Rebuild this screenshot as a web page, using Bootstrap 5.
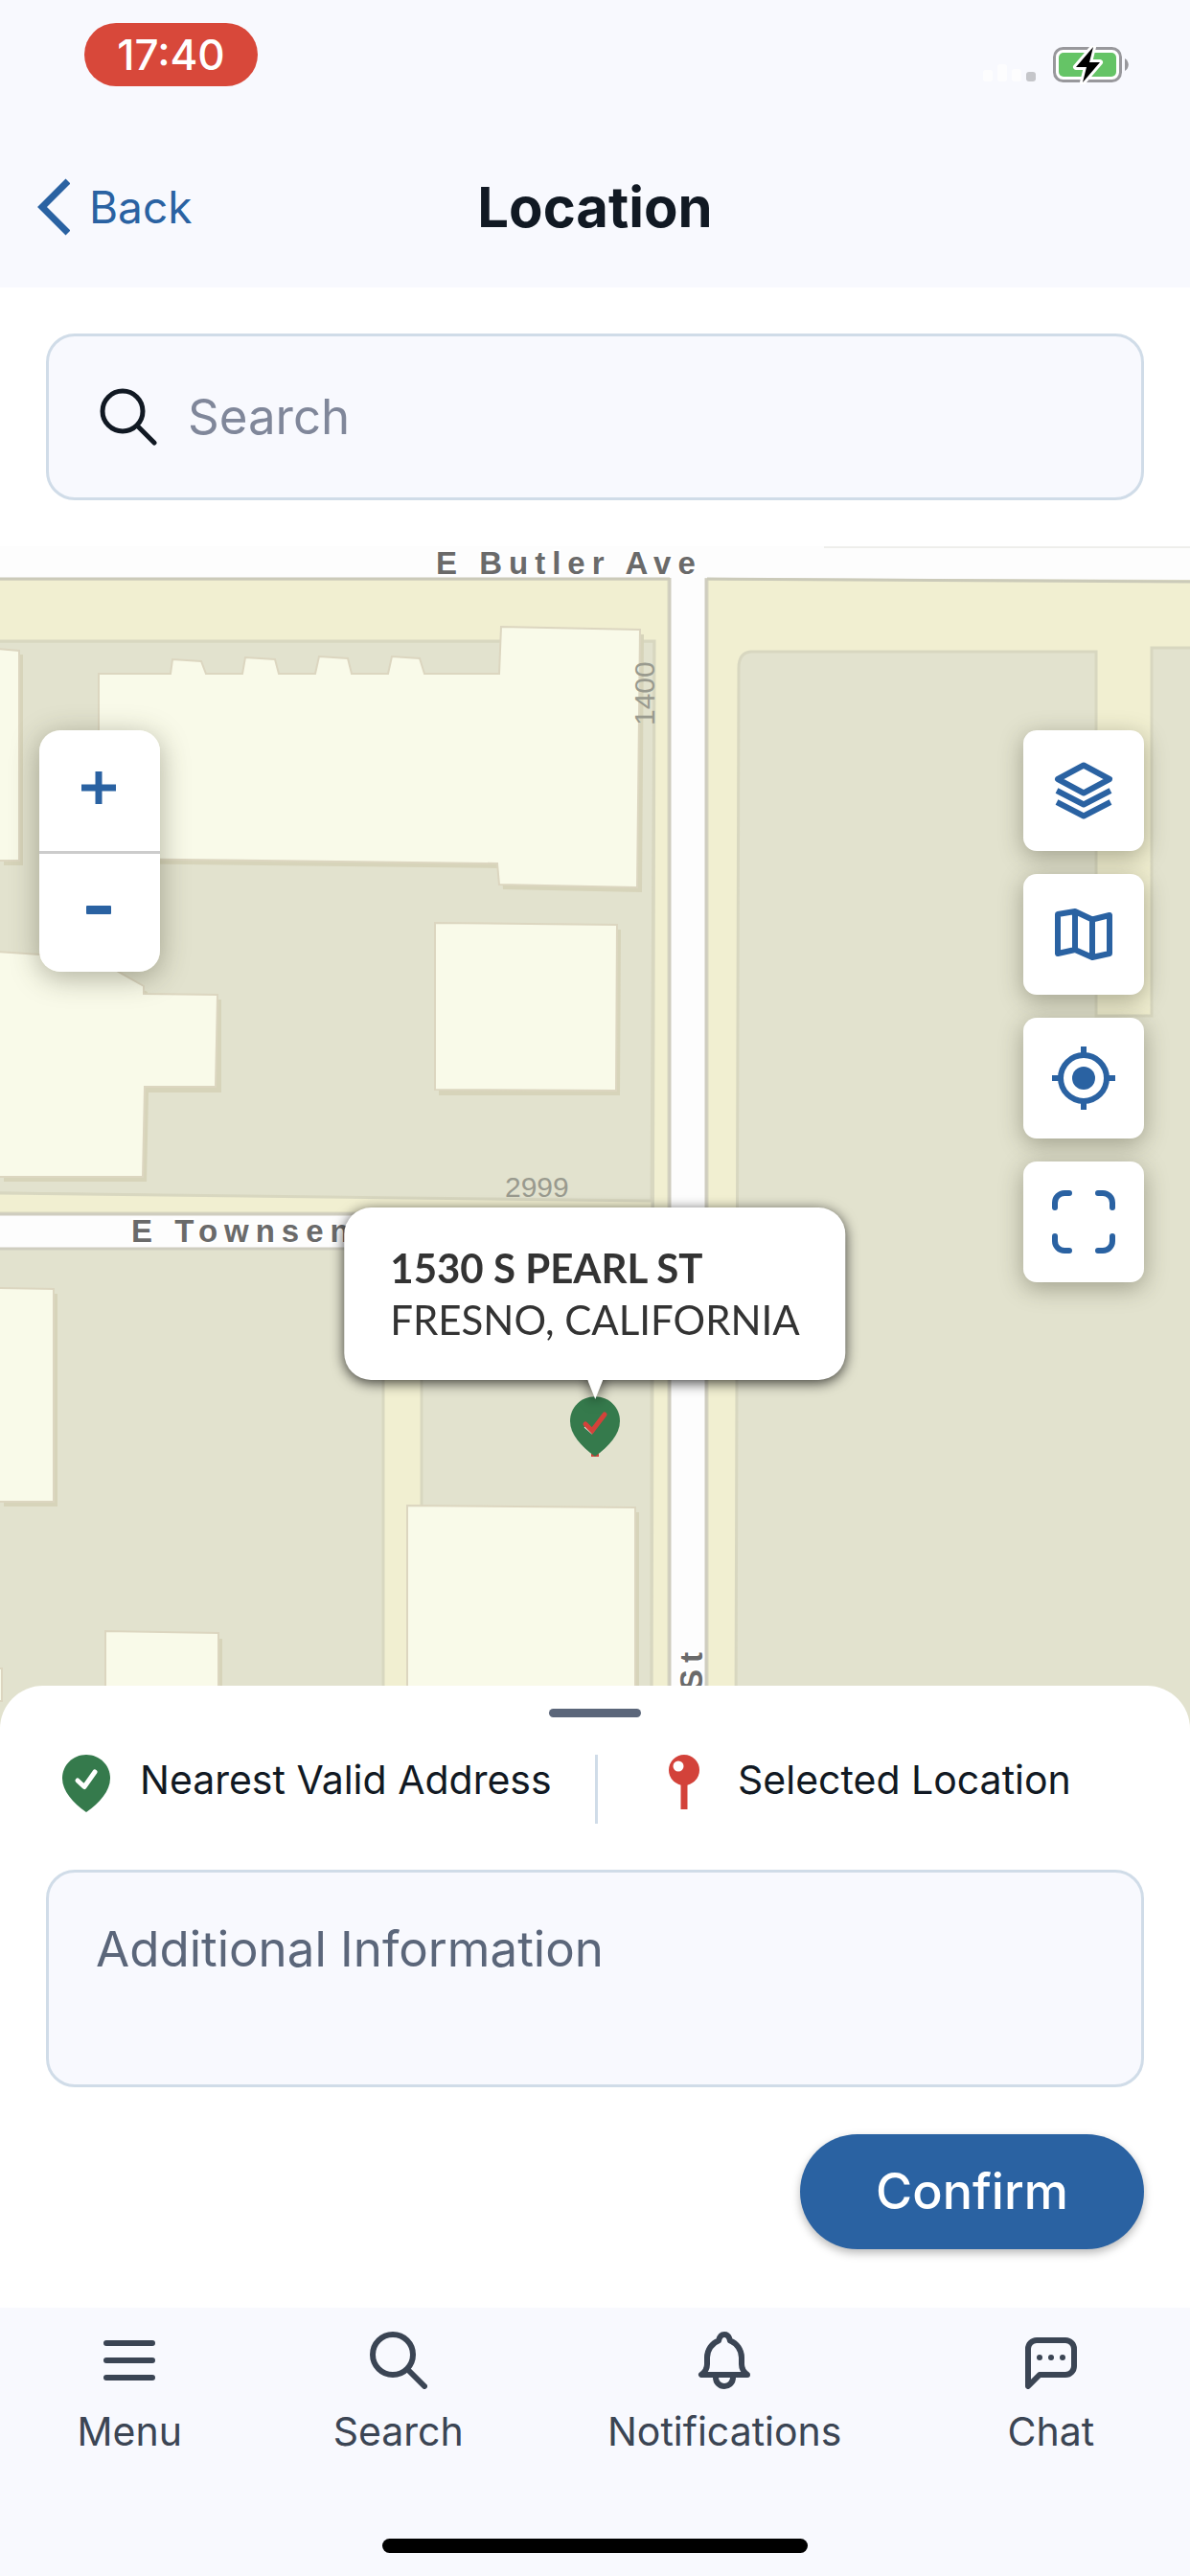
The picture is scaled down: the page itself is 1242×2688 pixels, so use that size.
<!DOCTYPE html>
<html lang="en">
<head>
<meta charset="utf-8">
<meta name="viewport" content="width=device-width, initial-scale=1">
<title>Location</title>
<link rel="stylesheet" href="https://cdn.jsdelivr.net/npm/bootstrap@5.3.0/dist/css/bootstrap.min.css">
<style>
  :root { --ink:#111923; --brand:#2a62a2; --slate:#5b667a; --nav:#3b4554; --line:#d0dce8; --surface:#f8f9fe; }
  body { font-family: Inter, "Liberation Sans", sans-serif; color: var(--ink); background: #fff; }
  svg { display: block; flex: none; }
  .app { min-height: 100vh; }
  .surface { background: var(--surface); }

  .status { height: 132px; padding: 24px 64px 0 88px; }
  .clock { background: #d8483a; color: #fff; font-size: 44px; line-height: 66px; font-weight: 500; border-radius: 33px; width: 181px; }
  .signals { margin-top: 24px; }
  .titlebar { height: 168px; padding: 0 39px; }
  .back-link { color: var(--brand); font-size: 46px; line-height: 60px; gap: 20px; }
  .page-title { font-size: 58px; line-height: 72px; font-weight: 700; }

  .search-area { padding: 48px; }
  .field { background: var(--surface); border: 3px solid var(--line); border-radius: 30px; }
  .search-box { height: 174px; padding: 0 53px; gap: 32px; }
  .search-box input, .notes { font-size: 51px; line-height: 60px; color: var(--ink); }
  .search-box input::placeholder { color: #80879a; opacity: 1; }

  .map { min-height: 900px; background: #e2e2ce; }
  .map-canvas { inset: 0; width: 100%; height: 100%; }
  .street { font: 700 33px "Liberation Sans", sans-serif; letter-spacing: 7px; fill: #6a6a6a; stroke: #fff; stroke-width: 4px; paint-order: stroke; }
  .range { font: 400 30px "Liberation Sans", sans-serif; fill: #999a8e; }
  .map-btn { width: 126px; height: 126px; background: #fff; color: var(--brand); border: 0; padding: 0; }
  .zoom-ctl { left: 41px; top: 192px; border-radius: 22px; overflow: hidden; box-shadow: 0 6px 30px rgba(60,60,40,.4); }
  .zoom-ctl .map-btn { padding: 0 2px 6px 0; }
  .zoom-ctl .map-btn + .map-btn { border-top: 3px solid #ccc; }
  .tools { right: 48px; top: 192px; gap: 24px; }
  .tools .map-btn { border-radius: 14px; box-shadow: 0 6px 24px rgba(60,60,40,.4); }
  .callout { left: 50%; top: 690px; transform: translateX(-50%); filter: drop-shadow(0 3px 7px rgba(0,0,0,.75)); }
  .callout-box { background: #fff; color: #333; border-radius: 28px; height: 180px; padding: 36px 48px; font-family: Lato, sans-serif; font-size: 42px; line-height: 54px; }
  .marker { left: 50%; top: 887px; transform: translateX(-50%); }

  .sheet { background: #fff; border-radius: 45px 45px 0 0; margin-top: -45px; padding: 24px 48px 61px; }
  .handle { width: 96px; height: 9px; border-radius: 5px; background: var(--slate); }
  .legend { margin: 39px 0 48px; height: 72px; font-size: 41px; line-height: 52px; }
  .legend-item { gap: 26px; width: 50%; padding-left: 12px; }
  .legend-item + .legend-item { border-left: 3px solid var(--line); padding-left: 60px; }
  .notes { height: 227px; padding: 50px 49px; resize: none; }
  .notes::placeholder { color: var(--slate); opacity: 1; }
  .confirm { width: 359px; height: 120px; margin-top: 49px; border-radius: 60px; background: var(--brand); color: #fff; font-size: 52px; font-weight: 500; box-shadow: 0 4px 10px rgba(0,0,0,.28); }

  .tabs { padding-top: 25px; display: grid; grid-template-columns: 27fr 29fr 39fr 29fr; }
  .tab-link { color: var(--nav); font-size: 41px; line-height: 50px; gap: 19px; }
  .home-bar { width: 444px; height: 15px; border-radius: 8px; background: #000; margin: 87px auto 24px; }
</style>
<script src="https://cdn.jsdelivr.net/npm/bootstrap@5.3.0/dist/js/bootstrap.bundle.min.js"></script>
</head>
<body>
<svg width="0" height="0" class="position-absolute" aria-hidden="true">
  <symbol id="i-search" viewBox="0 0 60 60"><circle cx="24" cy="24" r="21"/><path d="M40 40 57 57"/></symbol>
  <symbol id="i-pin" viewBox="0 0 50 60"><path d="M25 0C11 0 0 11 0 24.500 0 38 11 50 25 60 39 50 50 38 50 24.500 50 11 39 0 25 0z" fill="#357a4c"/></symbol>
</svg>
<div class="app d-flex flex-column">
  <header class="surface">
    <div class="status d-flex justify-content-between align-items-start">
      <div class="clock text-center">17:40</div>
      <svg class="signals" width="152" height="40" viewBox="0 0 152 40" role="img" aria-label="Battery charging">
        <g fill="#fdfdfe"><rect x="0" y="25" width="10" height="12" rx="3"/><rect x="15" y="19" width="10" height="18" rx="3"/><rect x="30" y="24" width="10" height="13" rx="3"/></g>
        <rect x="45" y="27" width="10" height="10" rx="3" fill="#c5c6ca"/>
        <rect x="74.500" y="2.500" width="69" height="34" rx="9" fill="#fff" stroke="#98989c" stroke-width="3"/>
        <rect x="79" y="7" width="60" height="25" rx="5" fill="#65c466"/>
        <path d="M148 13c5 3 5 10 0 13z" fill="#98989c"/>
        <path d="M115 1 97 22h11l-4 16 18-21h-11z" fill="#000" stroke="#fff" stroke-width="6" stroke-linejoin="round" paint-order="stroke"/>
      </svg>
    </div>
    <nav class="titlebar d-flex align-items-center" aria-label="Page">
      <div class="d-flex flex-fill w-25"><a href="#" class="back-link d-flex align-items-center text-decoration-none">
        <svg width="34" height="60" viewBox="0 0 34 60" fill="none" stroke="currentColor" stroke-width="7"><path d="M32 3 5 30l27 27"/></svg>Back</a></div>
      <h1 class="page-title m-0 text-center">Location</h1>
      <div class="flex-fill w-25"></div>
    </nav>
  </header>

  <div class="search-area">
    <div class="field search-box d-flex align-items-center">
      <svg width="60" height="60" fill="none" stroke="#111923" stroke-width="5" stroke-linecap="round"><use href="#i-search"/></svg>
      <input type="search" class="form-control border-0 bg-transparent shadow-none p-0" placeholder="Search" aria-label="Search">
    </div>
  </div>

  <main class="map position-relative flex-grow-1 overflow-hidden">
    <svg class="map-canvas position-absolute" viewBox="0 570 1242 1234" preserveAspectRatio="xMidYMin slice" role="img" aria-label="Street map">
      <path fill="#e2e2ce" d="M0 570h1242v1234H0z"/>
      <!-- parcels and verges -->
      <g fill="#f1efd1" stroke="#d8d7c0" stroke-width="3">
        <path d="M-5 604H1250V676H1202V1060H1144V680H784Q771 681 771 697L768 1810H738V604H698V1810H680V1255L-5 1245V1264H680V1810 1255L683 669H-5z"/>
        <path d="M-5 604H698V1810H680L683 669H-5z"/>
        <path d="M-5 1245 681 1253V1266H-5z"/>
        <path d="M400 1300h40v510h-40z"/>
      </g>
      <!-- roads -->
      <g fill="#fdfdfd" stroke="#cfcdbf" stroke-width="3">
        <path d="M-5 1267H700V1303H-5z"/>
        <path d="M699 600h38v1210h-38z"/>
      </g>
      <path fill="#fdfdfd" d="M0 570h1242v35L700 603H0z"/>
      <path fill="none" stroke="#cbcab9" stroke-width="3" d="M0 604H699M738 604 1242 607"/>
      <path fill="none" stroke="#e0e0da" stroke-width="1" d="M860 571H1242"/>
      <path fill="#fdfdfd" d="M702 598h32v12h-32zM702 1260h32v50h-32z"/>
      <!-- buildings -->
      <g fill="#d7d4ba" transform="translate(4 5)">
        <path d="M0 678h20v220H0zM104 703H521V655L668 657 666 926 521 923 520 901 104 896zM455 964 644 965 643 1138H454zM0 994 42 996 120 1015 150 1030V1038H227V1135H151L149 1228H0zM0 1345H56V1567H0zM110 1703 228 1705V1810H110zM425 1572 663 1573V1810H425z"/>
      </g>
      <g fill="#f9fae9" stroke="#dcd6c0" stroke-width="2">
        <path d="M-4 677 20 679V898H-4z"/>
        <path d="M103 703H178L180 688 210 690 215 703H253L256 686 287 688 291 703H329L333 685 363 687 367 703H405L409 685 438 687 443 703H521L523 654 668 657 665 926 521 923 519 901 103 896z"/>
        <path d="M454 963 644 965 643 1138 454 1137z"/>
        <path d="M-4 993 42 996 120 1012 150 1029V1037L227 1038 225 1134H151L149 1228H-4z"/>
        <path d="M-4 1344 56 1345V1567H-4z"/>
        <path d="M110 1702 228 1704V1810H110z"/>
        <path d="M425 1571 663 1573V1810H425z"/>
        <path d="M-4 1741H2V1775H-4z"/>
      </g>
      <text class="street" x="455" y="599">E Butler Ave</text>
      <text class="street" x="137" y="1296">E Townsend Ave</text>
      <text class="street" transform="translate(733 1764) rotate(-90)">St</text>
      <text class="range" x="527" y="1249">2999</text>
      <text class="range" transform="translate(683 757) rotate(-90)">1400</text>
    </svg>

    <div class="zoom-ctl position-absolute d-flex flex-column">
      <button type="button" class="map-btn d-flex align-items-center justify-content-center" aria-label="Zoom in"><svg width="36" height="36" viewBox="0 0 36 36" stroke="currentColor" stroke-width="7"><path d="M0 18h36M18 1v34"/></svg></button>
      <button type="button" class="map-btn d-flex align-items-center justify-content-center" aria-label="Zoom out"><svg width="26" height="9" viewBox="0 0 26 9"><rect width="26" height="9" rx="1" fill="currentColor"/></svg></button>
    </div>

    <div class="tools position-absolute d-flex flex-column">
      <button type="button" class="map-btn d-flex align-items-center justify-content-center" aria-label="Layers"><svg width="66" height="66" viewBox="0 0 66 66" fill="none" stroke="currentColor" stroke-width="6" stroke-linejoin="round"><path d="M33 6.500 60 21 33 35.500 6 21zM5 33l28 14.500 28-14.500M5 45l28 14.500 28-14.500"/></svg></button>
      <button type="button" class="map-btn d-flex align-items-center justify-content-center" aria-label="Base map"><svg width="66" height="66" viewBox="0 0 66 66" fill="none" stroke="currentColor" stroke-width="6" stroke-linejoin="round"><path d="M6 12 24 9 42 17.500 60 13V53L42 57 24 49 6 53zM24 9v40M42 17v40"/></svg></button>
      <button type="button" class="map-btn d-flex align-items-center justify-content-center" aria-label="My location"><svg width="66" height="66" viewBox="0 0 66 66" fill="none" stroke="currentColor" stroke-width="6"><circle cx="33" cy="33" r="24"/><circle cx="33" cy="33" r="12" fill="currentColor" stroke="none"/><path d="M33 0v10M33 56v10M0 33h10M56 33h10"/></svg></button>
      <button type="button" class="map-btn d-flex align-items-center justify-content-center" aria-label="Full screen"><svg width="66" height="66" viewBox="0 0 66 66" fill="none" stroke="currentColor" stroke-width="6" stroke-linecap="round"><path d="M3 18V13A10 10 0 0 1 13 3H18M48 3h5A10 10 0 0 1 63 13v5M63 48v5A10 10 0 0 1 53 63h-5M18 63H13A10 10 0 0 1 3 53V48"/></svg></button>
    </div>

    <svg class="marker position-absolute" width="54" height="64" viewBox="0 0 54 64" role="img" aria-label="Nearest valid address">
      <path d="M23 60h8v3h-8z" fill="#d3423a"/>
      <svg x="1" y="0" width="52" height="63"><use href="#i-pin"/></svg>
      <path d="m17 31 8 7" fill="none" stroke="#fff" stroke-width="4"/>
      <path d="m17 29 7 7 13-17" fill="none" stroke="#d3423a" stroke-width="5" stroke-linecap="round"/>
    </svg>
    <div class="callout position-absolute d-flex flex-column align-items-center">
      <div class="callout-box text-nowrap">
        <div class="fw-bold">1530 S PEARL ST</div>
        <div>FRESNO, CALIFORNIA</div>
      </div>
      <svg width="16" height="20" viewBox="0 0 16 20"><path d="M0 0h16L8 20z" fill="#fff"/></svg>
    </div>
  </main>

  <section class="sheet position-relative">
    <div class="handle mx-auto"></div>
    <div class="legend d-flex">
      <div class="legend-item d-flex">
        <svg width="60" height="60" viewBox="0 0 60 60"><svg x="5" width="50" height="60"><use href="#i-pin"/></svg><path d="m21 27 7 6.500 11-15.500" fill="none" stroke="#fff" stroke-width="5" stroke-linecap="round" stroke-linejoin="round"/></svg>
        <span>Nearest Valid Address</span>
      </div>
      <div class="legend-item d-flex">
        <svg width="60" height="60" viewBox="0 0 60 60"><path d="M26.500 26h7v31h-7z" fill="#d3423a"/><circle cx="30" cy="16" r="16" fill="#d3423a"/><circle cx="24" cy="12" r="5.500" fill="#fff"/></svg>
        <span>Selected Location</span>
      </div>
    </div>
    <textarea class="field notes form-control shadow-none" placeholder="Additional Information" aria-label="Additional Information"></textarea>
    <div class="d-flex justify-content-end"><button type="button" class="confirm btn p-0">Confirm</button></div>
  </section>

  <footer class="surface">
    <nav class="tabs" aria-label="Main">
      <a href="#" class="tab-link d-flex flex-column align-items-center text-decoration-none"><svg width="60" height="60" viewBox="0 0 60 60" stroke="currentColor" stroke-width="6" stroke-linecap="round"><path d="M6 12h48M6 30h48M6 48h48"/></svg>Menu</a>
      <a href="#" class="tab-link d-flex flex-column align-items-center text-decoration-none"><svg width="60" height="60" fill="none" stroke="currentColor" stroke-width="6" stroke-linecap="round"><use href="#i-search"/></svg>Search</a>
      <a href="#" class="tab-link d-flex flex-column align-items-center text-decoration-none"><svg width="60" height="60" viewBox="0 0 60 60" fill="none" stroke="currentColor" stroke-width="6" stroke-linecap="round" stroke-linejoin="round"><path d="M6 45H54C50 42 48 39 48 34V27C48 19 43 12 36 9.500 35 5 33.500 3 30 3S25 5 24 9.500C17 12 12 19 12 27V34C12 39 10 42 6 45zM21 46v2a9 9 0 0 0 18 0v-2"/></svg>Notifications</a>
      <a href="#" class="tab-link d-flex flex-column align-items-center text-decoration-none"><svg width="60" height="60" viewBox="0 0 60 60" fill="none" stroke="currentColor" stroke-width="6" stroke-linecap="round" stroke-linejoin="round"><path d="M6 57V18A9 9 0 0 1 15 9H45A9 9 0 0 1 54 18V36A9 9 0 0 1 45 45H18z"/><g fill="currentColor" stroke="none"><circle cx="18" cy="27" r="3"/><circle cx="30" cy="27" r="3"/><circle cx="42" cy="27" r="3"/></g></svg>Chat</a>
    </nav>
    <div class="home-bar"></div>
  </footer>
</div>
</body>
</html>
